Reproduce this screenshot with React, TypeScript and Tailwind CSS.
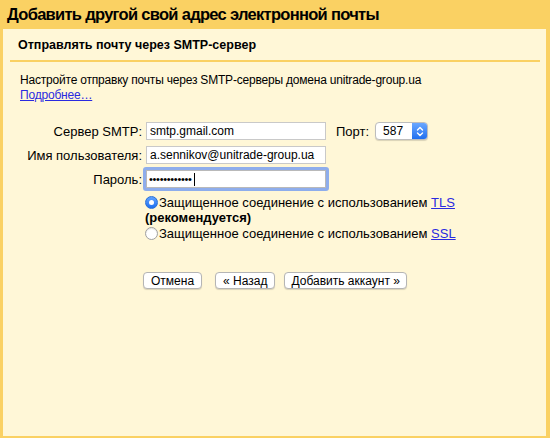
export default function App() {
  return (
    <div
      className="w-[550px] h-[438px] bg-[#fad163] flex flex-col text-black"
      style={{ fontFamily: '"Liberation Sans", Arial, sans-serif' }}
    >
      {/* Title bar */}
      <div className="h-[29px] pl-[7px] pb-[1px] flex items-center text-[16.5px] tracking-[-0.7px] font-bold leading-none">
        Добавить другой свой адрес электронной почты
      </div>

      {/* Panel */}
      <div className="flex-1 ml-[3px] mr-[4px] mb-[2px] bg-[#fff7d7]">
        <div className="pl-[15px] pt-[9px] h-[31px] text-[12.5px] font-bold leading-[15px]">
          Отправлять почту через SMTP-сервер
        </div>
        <div className="ml-[7px] mr-[6px] h-[2px] bg-[#fad163]" />

        <div className="pl-[17px] pt-[11px] text-[12px] tracking-[-0.2px] leading-[15px]">
          <div>Настройте отправку почты через SMTP-серверы домена unitrade-group.ua</div>
          <div>
            <a className="text-[#2a2ae0] underline">Подробнее…</a>
          </div>
        </div>

        {/* Form */}
        <div className="mt-[19px] text-[13px] leading-[15px]">
          <div className="flex items-center h-[18px]">
            <div className="w-[139px] text-right">Сервер SMTP:</div>
            <div className="ml-[4px] w-[180px] h-[18px] bg-white border border-[#c9c9c9] pl-[3px] flex items-center text-[12px]">
              smtp.gmail.com
            </div>
            <div className="ml-[10px]">Порт:</div>
            <div className="ml-[6px] w-[53px] h-[18px] rounded-[4px] bg-white border border-[#bdbdbd] shadow-[0_1px_1px_rgba(0,0,0,0.15)] flex overflow-hidden">
              <div className="flex-1 flex items-center pl-[7px] text-[12px]">587</div>
              <div className="w-[15px] bg-gradient-to-b from-[#6aa7ff] to-[#1f6fef] flex items-center justify-center">
                <svg width="8" height="11" viewBox="0 0 8 11" fill="none" stroke="white" strokeWidth="1.4" strokeLinecap="round" strokeLinejoin="round">
                  <path d="M1.5 4 L4 1.5 L6.5 4" />
                  <path d="M1.5 7 L4 9.5 L6.5 7" />
                </svg>
              </div>
            </div>
          </div>

          <div className="flex items-center h-[18px] mt-[6px]">
            <div className="w-[139px] text-right">Имя пользователя:</div>
            <div className="ml-[4px] w-[180px] h-[18px] bg-white border border-[#c9c9c9] pl-[3px] flex items-center text-[12px]">
              a.sennikov@unitrade-group.ua
            </div>
          </div>

          <div className="flex items-center h-[24px] mt-[3px]">
            <div className="w-[139px] text-right">Пароль:</div>
            <div className="ml-[1px] w-[186px] h-[24px] rounded-[3px] border-[3px] border-[#8eadec] flex">
              <div className="flex-1 bg-white border border-[#b9b9b9] pl-[2px] flex items-center text-[11px] tracking-[-0.3px]">
                ••••••••••••
                <span className="ml-[2px] w-px h-[13px] bg-black" />
              </div>
            </div>
          </div>

          <div className="pl-[142px] mt-[3px]">
            <label className="flex items-center h-[16px]">
              <span className="w-[13px] h-[13px] rounded-full bg-gradient-to-b from-[#5fa2ff] to-[#1a6ff0] border border-[#2a6fd6] flex items-center justify-center">
                <span className="w-[5px] h-[5px] rounded-full bg-white" />
              </span>
              <span className="ml-[1px]">
                Защищенное соединение с использованием <a className="text-[#2a2ae0] underline">TLS</a>
              </span>
            </label>
            <div className="font-bold h-[15px] leading-[15px]">(рекомендуется)</div>
            <label className="flex items-center h-[16px]">
              <span className="w-[13px] h-[13px] rounded-full bg-white border border-[#a0a0a0] shadow-[inset_0_1px_1px_rgba(0,0,0,0.1)]" />
              <span className="ml-[1px]">
                Защищенное соединение с использованием <a className="text-[#2a2ae0] underline">SSL</a>
              </span>
            </label>
          </div>

          <div className="pl-[140px] mt-[31px] flex text-[12px]">
            <button className="h-[17px] px-[7px] rounded-[4px] bg-white border border-[#b5b5b5] shadow-[0_1px_1px_rgba(0,0,0,0.15)] leading-none">
              Отмена
            </button>
            <button className="ml-[13px] h-[17px] px-[7px] rounded-[4px] bg-white border border-[#b5b5b5] shadow-[0_1px_1px_rgba(0,0,0,0.15)] leading-none">
              « Назад
            </button>
            <button className="ml-[9px] h-[17px] px-[6px] rounded-[4px] bg-white border border-[#b5b5b5] shadow-[0_1px_1px_rgba(0,0,0,0.15)] leading-none">
              Добавить аккаунт »
            </button>
          </div>
        </div>
      </div>
    </div>
  )
}
